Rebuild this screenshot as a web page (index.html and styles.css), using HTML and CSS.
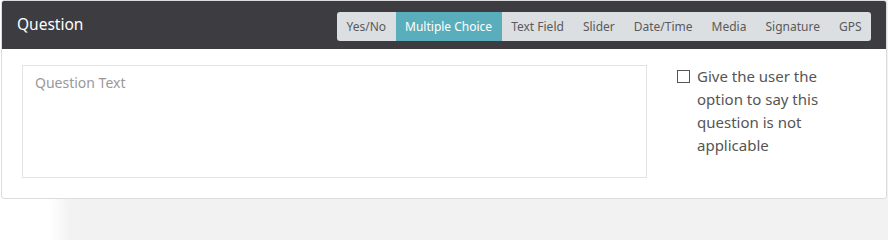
FILE: index.html
```html
<!DOCTYPE html>
<html>
<head>
<meta charset="utf-8">
<link rel="stylesheet" href="styles.css">
</head>
<body>
<div class="card">
  <div class="card-header">
    <div class="title">Question</div>
    <div class="types">
      <span class="type">Yes/No</span>
      <span class="type active">Multiple Choice</span>
      <span class="type">Text Field</span>
      <span class="type">Slider</span>
      <span class="type">Date/Time</span>
      <span class="type">Media</span>
      <span class="type">Signature</span>
      <span class="type">GPS</span>
    </div>
  </div>
  <div class="card-body">
    <div class="question-box">Question Text</div>
    <label class="na-option">
      <span class="checkbox"></span>
      <span class="na-text">Give the user the option to say this question is not applicable</span>
    </label>
  </div>
</div>
</body>
</html>
```
FILE: styles.css
```css
html, body {
  margin: 0;
  padding: 0;
}
body {
  width: 888px;
  height: 204px;
  background: linear-gradient(to right, #ffffff 0px, #ffffff 50px, #f2f2f2 70px, #f2f2f2 100%);
  font-family: "Noto Sans", "Open Sans", sans-serif;
  overflow: hidden;
}
.card {
  margin-left: 1px;
  width: 884px;
  height: 197px;
  border: 1px solid #dcdcdc;
  border-radius: 3px;
  background: #ffffff;
  overflow: hidden;
}
.card-header {
  height: 48px;
  background: #3d3c41;
  display: flex;
  align-items: center;
  justify-content: space-between;
  padding: 0 15px 0 15px;
}
.title {
  color: #ffffff;
  font-size: 15.5px;
  padding-bottom: 2px;
}
.types {
  display: flex;
  background: #dcdfe2;
  border-radius: 3px;
  height: 29px;
  overflow: hidden;
  margin-top: 2px;
}
.type {
  display: flex;
  align-items: center;
  padding: 0 9.5px;
  font-size: 12px;
  color: #5a5a5a;
}
.type.active {
  background: #5aaebb;
  color: #ffffff;
}
.card-body {
  display: flex;
  padding: 16px 20px 0 20px;
}
.question-box {
  width: 599px;
  height: 97px;
  border: 1px solid #e3e3e3;
  padding: 7px 12px;
  font-size: 14px;
  color: #999999;
}
.na-option {
  display: flex;
  margin-left: 30px;
  margin-top: 0;
  width: 160px;
}
.checkbox {
  flex: none;
  width: 11px;
  height: 11px;
  border: 1px solid #555555;
  margin-top: 5px;
  margin-right: 7px;
}
.na-text {
  font-size: 15px;
  line-height: 23px;
  color: #555555;
}
```
